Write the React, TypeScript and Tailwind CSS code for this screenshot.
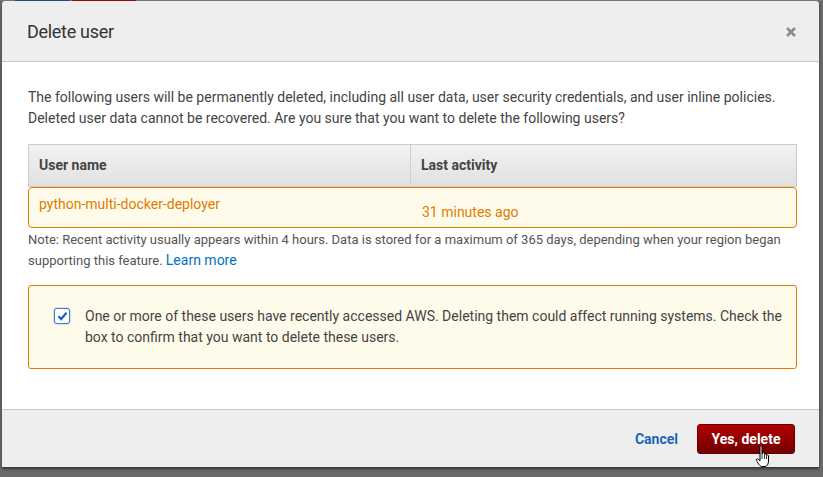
import React from "react";

export default function App() {
  return (
    <div
      className="relative w-[823px] h-[477px] overflow-hidden bg-[#6a6a6a] flex flex-col"
      style={{ fontFamily: "Roboto, 'Liberation Sans', sans-serif" }}
    >
      <div className="flex h-px shrink-0">
        <div className="w-[15px] bg-[#777]" />
        <div className="w-[55px] bg-[#1f4e8a]" />
        <div className="w-[2px] bg-[#777]" />
        <div className="w-[64px] bg-[#8a1010]" />
        <div className="flex-1 bg-[#777]" />
      </div>
      <div className="ml-[2px] w-[817px] h-[466px] flex flex-col rounded-t-[4px] overflow-hidden bg-white shadow-[0_2px_3px_rgba(0,0,0,0.5)]">
        {/* Header */}
        <div className="h-[61px] shrink-0 bg-[#eeeeee] border-b border-[#c8c8c8] flex items-center justify-between pl-[25px] pr-[22px]">
          <div className="text-[18px] text-[#333] tracking-[-0.3px] pt-[1px]">Delete user</div>
          <svg width="12" height="12" viewBox="0 0 12 12" className="mt-[2px]">
            <path d="M2 2 L10 10 M10 2 L2 10" stroke="#8a8a8a" strokeWidth="2.6" strokeLinecap="butt" />
          </svg>
        </div>
        {/* Body */}
        <div className="flex-1 bg-white pl-[26px] pr-[22px] pt-[25px]">
          <p className="text-[14px] leading-[21px] text-[#444]">
            The following users will be permanently deleted, including all user data, user security credentials, and user inline policies.
            <br />
            Deleted user data cannot be recovered. Are you sure that you want to delete the following users?
          </p>
          <div className="mt-[15px]">
            <div className="flex h-[43px] border border-[#cccccc] bg-gradient-to-b from-[#f2f2f2] to-[#e1e1e1]">
              <div className="w-[382px] border-r border-[#cfcfcf] flex items-center pl-[10px] text-[14px] font-bold text-[#444]">
                User name
              </div>
              <div className="flex-1 flex items-center pl-[10px] text-[14px] font-bold text-[#444]">Last activity</div>
            </div>
            <div className="flex h-[41px] border border-[#e07b00] rounded-[4px] bg-[#fffbea] text-[14px] text-[#e07b00]">
              <div className="w-[383px] pl-[10px] pt-[6px]">python-multi-docker-deployer</div>
              <div className="flex-1 pl-[10px] pt-[14px]">31 minutes ago</div>
            </div>
          </div>
          <p className="mt-[2px] text-[13px] leading-[20px] text-[#555]">
            Note: Recent activity usually appears within 4 hours. Data is stored for a maximum of 365 days, depending when your region began
            <br />
            supporting this feature. <span className="text-[14px] text-[#0073bb]">Learn more</span>
          </p>
          <div className="mt-[14px] h-[84px] border border-[#e07b00] rounded-[3px] bg-[#fffbea] flex items-start pl-[25px] pr-[10px] pt-[20px]">
            <div className="mt-[2px] w-[16px] h-[16px] shrink-0 rounded-[3px] border border-[#3b7dd8] bg-white shadow-[0_0_2px_rgba(59,125,216,0.7)] flex items-center justify-center">
              <svg width="11" height="10" viewBox="0 0 11 10">
                <path d="M1.5 5.2 L4.2 8 L9.5 1.8" fill="none" stroke="#1d5fbf" strokeWidth="2.2" />
              </svg>
            </div>
            <p className="ml-[15px] text-[14px] leading-[21px] text-[#444]">
              One or more of these users have recently accessed AWS. Deleting them could affect running systems. Check the box to confirm that you want to delete these users.
            </p>
          </div>
        </div>
        {/* Footer */}
        <div className="h-[58px] shrink-0 bg-[#eeeeee] border-t border-[#c8c8c8] flex items-center justify-end pr-[24px] pt-[1px]">
          <span className="text-[14px] font-bold text-[#1a66b8] mr-[19px]">Cancel</span>
          <div className="w-[98px] h-[30px] rounded-[3px] bg-gradient-to-b from-[#b00000] to-[#740000] border border-[#6a0000] flex items-center justify-center text-[14px] font-bold text-white">
            Yes, delete
          </div>
        </div>
      </div>
      {/* cursor */}
      <svg className="absolute left-[755px] top-[445px]" width="20" height="24" viewBox="0 0 20 24">
        <path
          d="M5 1.5 C5 0.7 7 0.7 7 1.5 L7 9 L7.5 8.2 C7.5 7.4 9.5 7.4 9.5 8.2 L9.5 9.5 C9.5 8.7 11.5 8.7 11.5 9.5 L11.5 10.5 C11.5 9.8 13.5 9.8 13.5 10.5 L13.5 16 C13.5 19 12 21.5 10 21.5 L7 21.5 C5 21.5 3.5 19 1.5 15.5 C0.8 14.3 2.2 13.2 3.2 14.2 L5 16 Z"
          fill="white"
          stroke="black"
          strokeWidth="1"
        />
        <path d="M7 9 L7 14 M9.5 9.5 L9.5 14 M11.5 10.5 L11.5 14" stroke="black" strokeWidth="0.8" />
      </svg>
    </div>
  );
}
